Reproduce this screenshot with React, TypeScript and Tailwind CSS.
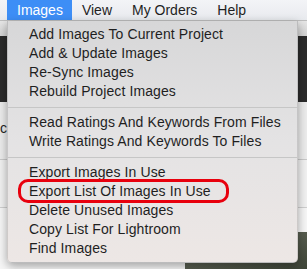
import React from "react";

const groups: string[][] = [
  ["Add Images To Current Project", "Add & Update Images", "Re-Sync Images", "Rebuild Project Images"],
  ["Read Ratings And Keywords From Files", "Write Ratings And Keywords To Files"],
  ["Export Images In Use", "Export List Of Images In Use", "Delete Unused Images", "Copy List For Lightroom", "Find Images"],
];

export default function App() {
  return (
    <div
      className="relative w-[307px] h-[269px] overflow-hidden bg-[#f5f5f5] text-[14px] text-[#1f1f1f]"
      style={{ fontFamily: '"Liberation Sans", Arial, sans-serif' }}
    >
      {/* background window */}
      <div className="flex flex-col h-full">
        <div className="h-[21px] flex items-center bg-gradient-to-b from-[#f3f4f7] to-[#e8eaee] border-b border-[#bdbdbd]">
          <div className="h-full w-[7px]" />
          <div className="h-full flex items-center pl-[10px] pr-[9px] bg-[#3d8ef6] text-white">Images</div>
          <div className="h-full flex items-center px-[10px]">View</div>
          <div className="h-full flex items-center px-[10px]">My Orders</div>
          <div className="h-full flex items-center px-[10px]">Help</div>
        </div>
        <div className="h-[15px] bg-gradient-to-b from-[#e6e6e6] to-[#d3d3d3]" />
        <div className="h-[66px] bg-[#2b2b2b]" />
        <div className="h-[58px] bg-[#ececec] border-b border-[#c9c9c9] flex items-center pb-[4px]">
          <span>ch</span>
        </div>
        <div className="h-[48px] bg-[#f1f1f1] border-b border-[#cfcfcf]" />
        <div className="flex-1 bg-[#f6f6f6] flex">
          <div className="ml-[185px] mt-[24px] flex-1 bg-gradient-to-br from-[#6f7465] to-[#3e4538]" />
        </div>
      </div>

      {/* dropdown menu */}
      <div className="absolute left-[7px] top-[21px] w-[291px] rounded-b-[5px] bg-gradient-to-b from-[#d7d7d8] via-[#e4e3e4] to-[#ede7e5] shadow-[0_3px_10px_rgba(0,0,0,0.35)] border-x border-b border-[rgba(0,0,0,0.12)] pt-[4px] pb-[4px]">
        {groups.map((g, gi) => (
          <div key={gi}>
            {gi > 0 && (
              <div className="h-[12px] flex items-center">
                <div className="h-px w-full bg-[#c6c6c6]" />
              </div>
            )}
            {g.map((t) => (
              <div key={t} className="h-[19px] flex items-center pl-[21px] whitespace-nowrap tracking-[0.1px]">
                {t}
              </div>
            ))}
          </div>
        ))}
        <div className="absolute left-[10px] top-[158px] w-[211px] h-[24px] rounded-[10px] border-[3px] border-[#e8000d]" />
      </div>
    </div>
  );
}
